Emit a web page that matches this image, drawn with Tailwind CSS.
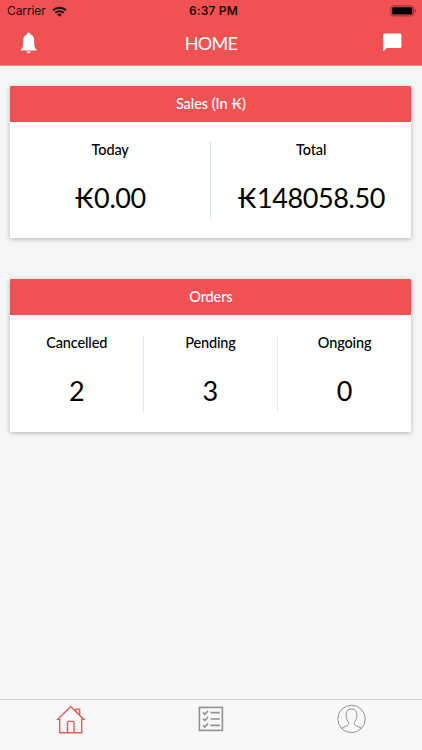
<!DOCTYPE html>
<html lang="en">
<head>
<meta charset="utf-8">
<meta name="viewport" content="width=device-width, initial-scale=1">
<title>Home</title>
<script src="https://cdn.jsdelivr.net/npm/@tailwindcss/browser@4"></script>
</head>
<body class="flex h-screen flex-col overflow-hidden bg-[#f6f6f6] font-['Lato',sans-serif] text-black">
<header class="h-[66px] shrink-0 border-b border-[#f58a8b] bg-[#f05254]">
  <div class="grid h-[22px] grid-cols-[1fr_60px_1fr] items-center pl-[7px] pr-[5px] font-['Inter',sans-serif] text-[12px] leading-[22px] text-[#230b0b]">
    <div class="flex items-center gap-[6px]">
      <span class="tracking-[-0.1px]">Carrier</span>
      <svg class="h-[11px] w-[15px]" viewBox="0 0 15 11" fill="none" stroke="#1c0808" stroke-width="2"><path d="M1 4.300a9.400 9.400 0 0 1 13 0M3.400 6.800a5.900 5.900 0 0 1 8.200 0"/><path d="M7.500 10.800 5.200 8.600a3.300 3.300 0 0 1 4.600 0Z" fill="#1c0808" stroke="none"/></svg>
    </div>
    <div class="pl-[3px] text-center font-semibold whitespace-nowrap tracking-[0.150px]">6:37 PM</div>
    <svg class="h-[12px] w-[27px] justify-self-end" viewBox="0 0 27 12"><rect x=".9" y=".9" width="22.600" height="10" rx="2.400" fill="none" stroke="#8b3031"/><rect x="2.200" y="2.200" width="20" height="7.400" rx="1" fill="#000"/><path d="M24.700 4v4c1.600-.6 1.600-3.400 0-4Z" fill="#8b3031"/></svg>
  </div>
  <div class="grid h-[43px] grid-cols-3 items-center px-[20px] text-white">
    <svg class="h-[22px] w-[17px] -mt-[2px]" viewBox="0 0 17 22" fill="currentColor"><path d="M8.700.5c1 0 1.600.7 1.600 1.800 2.700.8 3.900 3.200 3.900 6.100 0 4.800.3 7.300 2.300 9.200v.9H.9v-.9c2-1.900 2.300-4.400 2.300-9.200 0-2.900 1.200-5.300 3.900-6.100 0-1.100.6-1.800 1.600-1.800ZM6.500 19.500h4.400c-.3 1.100-1.100 1.700-2.200 1.700s-1.900-.6-2.200-1.700Z"/></svg>
    <h1 class="-mt-[2px] text-center text-[18px] leading-[22px] tracking-[-0.700px]">HOME</h1>
    <svg class="-mt-[3px] h-[20px] w-[20px] justify-self-end" viewBox="0 0 20 20" fill="currentColor"><path d="M3 1.400h14.700c1 0 1.700.7 1.700 1.700v11.300c0 1-.7 1.700-1.700 1.700H4.700L1.200 19.600V3.100C1.200 2.100 2 1.400 3 1.400Z"/></svg>
  </div>
</header>
<main class="flex flex-1 flex-col gap-[41px] pl-[10.400px] pr-[10.600px] pt-[19.500px]">
  <section class="h-[152.500px] rounded-[1px] bg-white shadow-[0_1px_5px_rgba(0,0,0,0.28)]">
    <h2 class="h-[36px] rounded-t-[1px] bg-[#f05254] text-center text-[14.500px] font-medium leading-[36px] tracking-[-0.050px] text-white">Sales (In ₭)</h2>
    <div class="grid grid-cols-2 pt-[20px] text-center">
      <div class="h-[77px] border-r border-[#d5e7f5]"><p class="text-[14.500px] font-medium leading-[16px] tracking-[-0.150px]">Today</p><p class="mt-[23px] text-[27px] leading-[34px] tracking-[-0.400px]">₭0.00</p></div>
      <div class="h-[77px]"><p class="text-[14.500px] font-medium leading-[16px] tracking-[-0.150px]">Total</p><p class="mt-[23px] text-[27px] leading-[34px] tracking-[-0.400px]">₭148058.50</p></div>
    </div>
  </section>
  <section class="h-[152.500px] rounded-[1px] bg-white shadow-[0_1px_5px_rgba(0,0,0,0.28)]">
    <h2 class="h-[36px] rounded-t-[1px] bg-[#f05254] text-center text-[14.500px] font-medium leading-[36px] tracking-[-0.150px] text-white">Orders</h2>
    <div class="grid grid-cols-3 divide-x divide-[#dfe8f5] pt-[20px] text-center">
      <div class="h-[77px]"><p class="text-[14.500px] font-medium leading-[16px] tracking-[-0.150px]">Cancelled</p><p class="mt-[23px] text-[27px] leading-[34px]">2</p></div>
      <div class="h-[77px]"><p class="text-[14.500px] font-medium leading-[16px] tracking-[-0.150px]">Pending</p><p class="mt-[23px] text-[27px] leading-[34px]">3</p></div>
      <div class="h-[77px]"><p class="text-[14.500px] font-medium leading-[16px] tracking-[-0.150px]">Ongoing</p><p class="mt-[23px] text-[27px] leading-[34px]">0</p></div>
    </div>
  </section>
</main>
<nav class="grid h-[51px] shrink-0 grid-cols-3 justify-items-center border-t border-[#d2d2d2] bg-[#f8f8f8] pt-[4px]">
  <svg class="h-[30px] w-[30px]" viewBox="-.7 0 30 30" fill="none" stroke="#e45b5d" stroke-width="1.400"><path d="M1.900 15.400 15 2.400l13.100 13H26v13.400H4V15.400ZM11.800 28.800V18.300q0-.9.900-.9h4.700q.9 0 .9.900v10.500M19.900 7.300V5.100h4v6"/></svg>
  <svg class="h-[30px] w-[30px]" viewBox=".5 0 30 30" fill="none" stroke="#929292"><rect x="3.900" y="3.400" width="23" height="23" stroke-width="1.600"/><path stroke-width="1.600" d="M15 8.600h9.300M15 15h9.300M15 21.400h9.300M7.400 8.400l1.900 1.900 3.300-3.600M7.400 14.700l1.900 1.900 3.300-3.600M7.400 21.100l1.900 1.900 3.300-3.600"/></svg>
  <svg class="h-[30px] w-[30px]" viewBox="1 .3 30 30" fill="none" stroke="#929292"><circle cx="15.500" cy="15.200" r="13.700"/><path d="M5.400 24.700c1.900-1.500 4.700-1.900 6.300-3.100 1.300-1 1.200-2.600.3-3.900-1.500-2.100-2.100-4-1.800-7.600.2-3 2-4.800 5.300-4.800s5.100 1.800 5.300 4.800c.3 3.600-.3 5.500-1.800 7.600-.9 1.300-1 2.900.3 3.900 1.600 1.200 4.400 1.600 6.300 3.100"/></svg>
</nav>
</body>
</html>
